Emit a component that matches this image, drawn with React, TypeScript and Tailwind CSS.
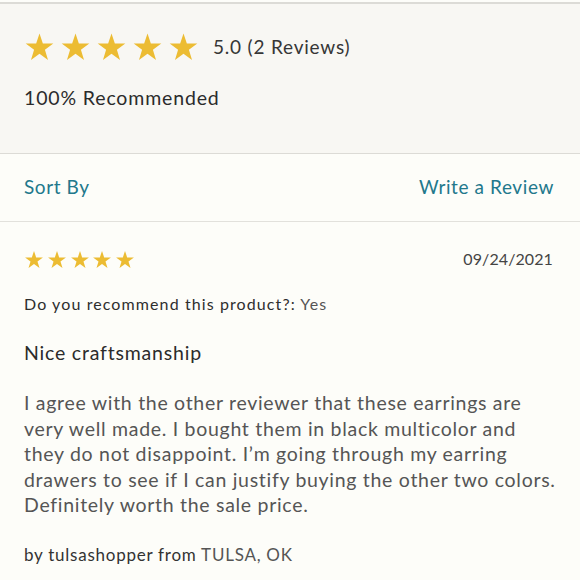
import React from 'react';

const Star: React.FC<{ size: number }> = ({ size }) => (
  <svg width={size} height={size} viewBox="0 0 24 24" className="shrink-0">
    <polygon
      fill="#ecbc33"
      points="12,1.2 14.6,8.9 22.7,8.9 16.2,13.8 18.6,21.6 12,16.9 5.4,21.6 7.8,13.8 1.3,8.9 9.4,8.9"
    />
  </svg>
);

const App: React.FC = () => {
  return (
    <div className="w-[580px] h-[580px] overflow-hidden bg-[#fdfdf9] font-['Lato','Noto_Sans',sans-serif]">
      <section className="mt-[2px] border-t-2 border-b border-[#dcdbd6] bg-[#f8f7f3] h-[152px] px-6">
        <div className="flex items-center h-[30px] mt-[28px]">
          <div className="flex gap-[5px]">
            {[0, 1, 2, 3, 4].map((i) => (
              <Star key={i} size={31} />
            ))}
          </div>
          <span className="ml-[14px] text-[19px] text-[#363636] tracking-[0.8px]">5.0 (2 Reviews)</span>
        </div>
        <div className="mt-[21px] text-[19.5px] text-[#2b2b2b] tracking-[0.85px]">100% Recommended</div>
      </section>

      <section className="flex items-center justify-between h-[68px] px-6 border-b border-[#e2e1dc] text-[19px] text-[#22788c] tracking-[0.6px]">
        <span>Sort By</span>
        <span className="mr-[2px]">Write a Review</span>
      </section>

      <section className="px-6 pt-[27px]">
        <div className="flex items-center justify-between h-[22px]">
          <div className="flex gap-[2.8px]">
            {[0, 1, 2, 3, 4].map((i) => (
              <Star key={i} size={20} />
            ))}
          </div>
          <span className="text-[16px] leading-[20px] text-[#444] tracking-[0.1px] mr-[3px] -mt-[2px]">09/24/2021</span>
        </div>
        <div className="mt-[23px] text-[16px] leading-[20px] text-[#2e2e2e] tracking-[1.1px]">
          Do you recommend this product?: <span className="text-[#555]">Yes</span>
        </div>
        <div className="mt-[27px] text-[19.5px] leading-[24px] text-[#2b2b2b] tracking-[0.8px]">Nice craftsmanship</div>
        <p className="mt-[25px] text-[19.5px] leading-[25.6px] text-[#555] tracking-[0.7px]">
          I agree with the other reviewer that these earrings are very well made. I bought them in black multicolor and
          they do not disappoint. I’m going through my earring drawers to see if I can justify buying the other two
          colors. Definitely worth the sale price.
        </p>
        <div className="mt-[26px] text-[17px] leading-[22px] text-[#333] tracking-[0.75px]">
          by tulsashopper from <span className="text-[#555]">TULSA, OK</span>
        </div>
      </section>
    </div>
  );
};

export default App;
